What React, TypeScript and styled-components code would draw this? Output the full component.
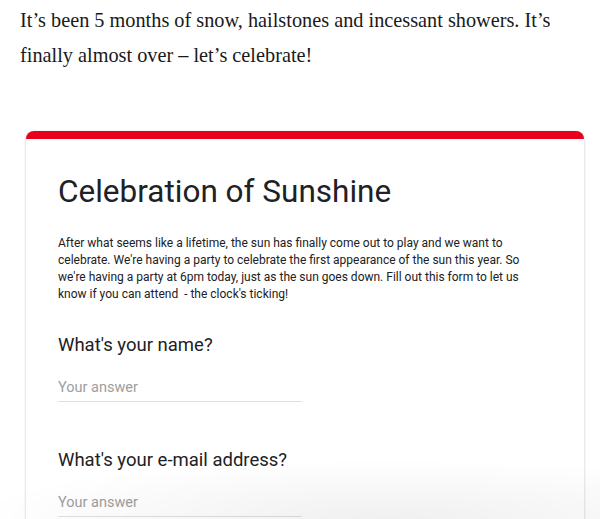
import styled, { createGlobalStyle } from "styled-components";

const GlobalStyle = createGlobalStyle`
  body {
    margin: 0;
    background: #fff;
    overflow: hidden;
  }
  body::after {
    content: "";
    position: fixed;
    left: 0;
    right: 0;
    bottom: 0;
    height: 60px;
    pointer-events: none;
    background: radial-gradient(
      ellipse 70% 100% at 65% 100%,
      rgba(0, 0, 0, 0.06),
      transparent
    );
  }
`;

interface Question {
  label: string;
}

const questions: Question[] = [
  { label: "What's your name?" },
  { label: "What's your e-mail address?" },
];

export default function App() {
  return (
    <Page>
      <GlobalStyle />
      <Intro>
        It’s been 5 months of snow, hailstones and incessant showers. It’s
        finally almost over – let’s celebrate!
      </Intro>
      <Card>
        <Header>
          <Title>Celebration of Sunshine</Title>
          <Description>
            After what seems like a lifetime, the sun has finally come out to
            play and we want to celebrate. We're having a party to celebrate
            the first appearance of the sun this year. So we're having a party
            at 6pm today, just as the sun goes down. Fill out this form to let
            us know if you can attend&nbsp; - the clock's ticking!
          </Description>
        </Header>
        {questions.map((q) => (
          <Field key={q.label}>
            <Label>{q.label}</Label>
            <Answer placeholder="Your answer" />
          </Field>
        ))}
      </Card>
    </Page>
  );
}

const Page = styled.div`
  padding: 3px 17px 0 20px;
`;

const Intro = styled.p`
  margin: 0;
  font-family: "Liberation Serif", "Times New Roman", serif;
  font-size: 20.3px;
  line-height: 35px;
  color: #1a1a1a;
  max-width: 560px;
`;

const Card = styled.div`
  margin: 58px 0 0 6px;
  width: 558px;
  background: #fff;
  border-radius: 8px;
  border-top: 8px solid #e8001c;
  box-shadow: 0 1px 3px rgba(0, 0, 0, 0.2), 0 0 1px rgba(0, 0, 0, 0.12);
  padding: 0 32px 40px;
  box-sizing: border-box;
  font-family: Roboto, "Liberation Sans", sans-serif;
`;

const Header = styled.div`
  padding: 33px 0 20px;
`;

const Title = styled.h1`
  margin: 0;
  font-size: 31.5px;
  font-weight: 400;
  line-height: 40px;
  color: #202124;
`;

const Description = styled.p`
  margin: 23px 0 0;
  font-size: 12px;
  line-height: 17px;
  color: #202124;
  max-width: 470px;
`;

const Field = styled.div`
  padding: 10px 0 36px;
`;

const Label = styled.div`
  font-size: 18.5px;
  line-height: 24px;
  color: #202124;
`;

const Answer = styled.input`
  display: block;
  margin-top: 18px;
  width: 244px;
  border: none;
  border-bottom: 1px solid #e0e0e0;
  padding: 4px 0 5px;
  font-family: Roboto, "Liberation Sans", sans-serif;
  font-size: 14.5px;
  color: #202124;
  outline: none;
  background: transparent;

  &::placeholder {
    color: #9e9e9e;
  }
`;
